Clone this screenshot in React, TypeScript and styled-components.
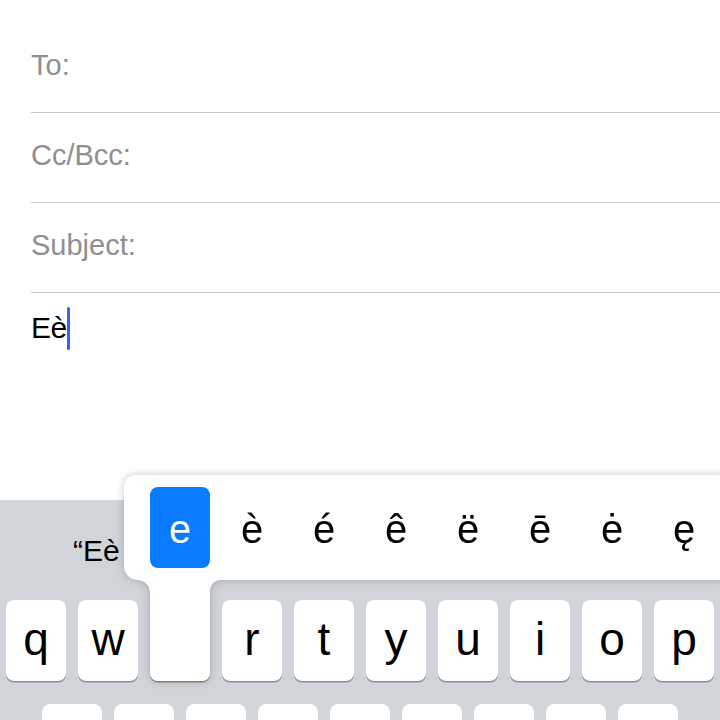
import React from 'react';
import styled, { createGlobalStyle } from 'styled-components';

const GlobalStyle = createGlobalStyle`
  html, body {
    margin: 0;
    padding: 0;
    background: #ffffff;
  }
  body {
    font-family: "Liberation Sans", Arial, sans-serif;
  }
`;

const SScreen = styled.div`
  position: relative;
  width: 720px;
  height: 720px;
  overflow: hidden;
  display: flex;
  flex-direction: column;
  background: #ffffff;
`;

const SCompose = styled.div`
  flex: 0 0 500px;
  padding: 23px 0 0 31px;
  box-sizing: border-box;
`;

const SField = styled.div`
  height: 90px;
  padding-bottom: 5px;
  border-bottom: 1px solid #c8c7cc;
  box-sizing: border-box;
  display: flex;
  align-items: center;
  font-size: 29px;
  color: #8e8e93;
`;

const SBody = styled.div`
  display: flex;
  align-items: center;
  padding-top: 13px;
  font-size: 30px;
  line-height: 44px;
  letter-spacing: -0.5px;
  color: #000000;
`;

const SCursor = styled.span`
  display: inline-block;
  width: 3px;
  height: 43px;
  border-radius: 2px;
  background: #3d63d9;
`;

const SKeyboard = styled.div`
  position: relative;
  flex: 1 0 auto;
  background: #d1d4d9;
  display: flex;
  flex-direction: column;
`;

const SSuggestions = styled.div`
  height: 90px;
  display: flex;
  align-items: center;
  padding: 12px 0 0 73px;
  box-sizing: border-box;
  font-size: 30px;
  color: #000000;
`;

const SRows = styled.div`
  display: flex;
  flex-direction: column;
  gap: 23px;
  padding-top: 10px;
`;

const SRow = styled.div<{ $indent: number }>`
  display: flex;
  gap: 12px;
  padding-left: ${({ $indent }) => $indent}px;
`;

const SKey = styled.div`
  flex: 0 0 60px;
  height: 81px;
  padding-bottom: 4px;
  box-sizing: border-box;
  border-radius: 8px;
  background: #ffffff;
  box-shadow: 0 1.5px 0 #898b8f;
  display: flex;
  align-items: center;
  justify-content: center;
  font-size: 46px;
  color: #000000;
`;

const SPopup = styled.div`
  position: absolute;
  top: -25px;
  left: 124px;
  display: flex;
  flex-direction: column;
  filter: drop-shadow(0 0 4px rgba(0, 0, 0, 0.22));
`;

const SBar = styled.div`
  width: 606px;
  height: 105px;
  display: flex;
  gap: 12px;
  padding: 12px 0 0 26px;
  box-sizing: border-box;
  background: #ffffff;
  border-radius: 12px 12px 12px 14px;
`;

const SAccent = styled.div<{ $selected?: boolean }>`
  flex: 0 0 60px;
  height: 81px;
  padding-top: 4px;
  box-sizing: border-box;
  border-radius: 8px;
  background: ${({ $selected }) => ($selected ? '#0a7aff' : 'transparent')};
  color: ${({ $selected }) => ($selected ? '#ffffff' : '#000000')};
  display: flex;
  align-items: center;
  justify-content: center;
  font-size: 40px;
`;

const SStem = styled.div`
  position: relative;
  width: 60px;
  height: 101px;
  margin-left: 26px;
  background: #ffffff;
  border-radius: 0 0 8px 8px;

  &::before {
    content: '';
    position: absolute;
    top: 0;
    left: -12px;
    width: 12px;
    height: 12px;
    background: radial-gradient(circle at 0 100%, transparent 11.5px, #ffffff 12px);
  }

  &::after {
    content: '';
    position: absolute;
    top: 0;
    right: -10px;
    width: 10px;
    height: 10px;
    background: radial-gradient(circle at 100% 100%, transparent 9.5px, #ffffff 10px);
  }
`;

const fields = ['To:', 'Cc/Bcc:', 'Subject:'];
const accents = ['e', 'è', 'é', 'ê', 'ë', 'ē', 'ė', 'ę'];
// second row letters sit below the visible edge, so only the key caps show
const rows = [
  { indent: 6, keys: ['q', 'w', 'e', 'r', 't', 'y', 'u', 'i', 'o', 'p'] },
  { indent: 42, keys: ['', '', '', '', '', '', '', '', ''] },
];

export default function App() {
  return (
    <>
      <GlobalStyle />
      <SScreen>
        <SCompose>
          {fields.map((f) => (
            <SField key={f}>{f}</SField>
          ))}
          <SBody>
            <span>Eè</span>
            <SCursor />
          </SBody>
        </SCompose>
        <SKeyboard>
          <SSuggestions>“Eè</SSuggestions>
          <SRows>
            {rows.map((row) => (
              <SRow key={row.indent} $indent={row.indent}>
                {row.keys.map((k, i) => (
                  <SKey key={i}>{k}</SKey>
                ))}
              </SRow>
            ))}
          </SRows>
          <SPopup>
            <SBar>
              {accents.map((a, i) => (
                <SAccent key={a} $selected={i === 0}>
                  {a}
                </SAccent>
              ))}
            </SBar>
            <SStem />
          </SPopup>
        </SKeyboard>
      </SScreen>
    </>
  );
}
